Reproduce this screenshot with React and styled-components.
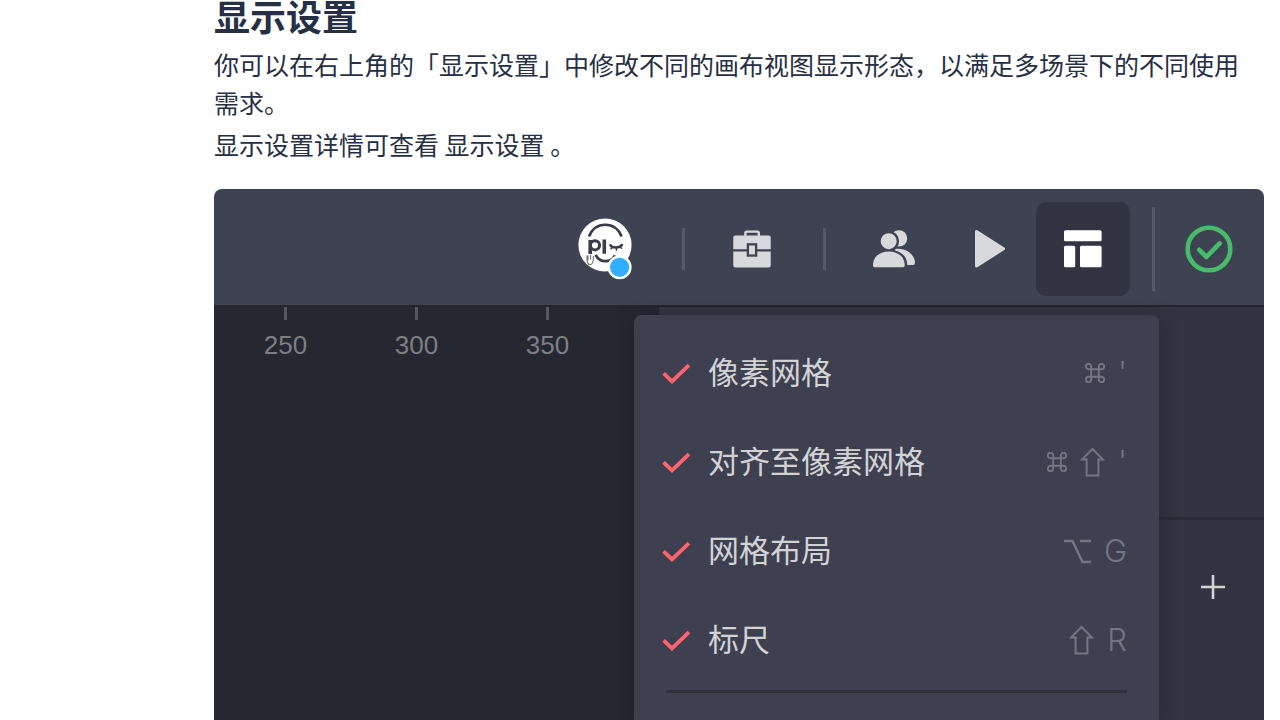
import { useState } from "react";
import styled, { createGlobalStyle } from "styled-components";

const viewOptions = [
  { id: "pixel-grid", label: "像素网格", keys: ["cmd", "'"] },
  { id: "snap-grid", label: "对齐至像素网格", keys: ["cmd", "shift", "'"] },
  { id: "layout-grid", label: "网格布局", keys: ["option", "G"] },
  { id: "ruler", label: "标尺", keys: ["shift", "R"] },
];

const rulerMarks = [250, 300, 350];

export default function App() {

  const [checked, setChecked] = useState(viewOptions.map(o => o.id));

  function toggle(id) {
    if (checked.includes(id)) {
      setChecked(checked.filter(c => c !== id));
    } else {
      setChecked([...checked, id]);
    }
  }

  return (
    <>
      <GlobalStyle />
      <Article>
        <Title>显示设置</Title>
        <Paragraph>
          你可以在右上角的「显示设置」中修改不同的画布视图显示形态，以满足多场景下的不同使用需求。
        </Paragraph>
        <Paragraph>
          显示设置详情可查看 <a href="#display">显示设置</a> 。
        </Paragraph>

        <Editor>
          <Toolbar>
            <AvatarButton aria-label="avatar"><Avatar /></AvatarButton>
            <Separator $height="42px" />
            <ToolButton aria-label="assets"><BriefcaseIcon /></ToolButton>
            <Separator $height="42px" />
            <ToolButton aria-label="members"><PeopleIcon /></ToolButton>
            <ToolButton aria-label="preview"><PlayIcon /></ToolButton>
            <ToolButton aria-label="display settings" $active><LayoutIcon /></ToolButton>
            <Separator $height="84px" />
            <StatusButton aria-label="saved"><StatusIcon /></StatusButton>
          </Toolbar>

          <Workspace>
            <Canvas>
              <Ruler>
                {rulerMarks.map(mark => <li key={mark}>{mark}</li>)}
              </Ruler>
            </Canvas>
            <SidePanel>
              <SideSection />
              <SideHeader>
                <AddButton aria-label="add">
                  <svg width="24" height="24" viewBox="0 0 24 24" stroke="currentColor" strokeWidth="2.6">
                    <path d="M0 12H24M12 0V24" />
                  </svg>
                </AddButton>
              </SideHeader>
            </SidePanel>

            <Menu>
              {viewOptions.map(({ id, label, keys }) =>
                <MenuItem key={id}>
                  <CheckBox>
                    <input type="checkbox" checked={checked.includes(id)} onChange={() => toggle(id)} />
                    <svg width="28" height="22" viewBox="0 0 28 22" fill="none" stroke="currentColor" strokeWidth="3.8">
                      <path d="M1.6 10.3L10 18.4L27 2.2" />
                    </svg>
                  </CheckBox>
                  <Label>{label}</Label>
                  <Shortcut>
                    {keys.map(k => <Key key={k} name={k} />)}
                  </Shortcut>
                </MenuItem>
              )}
              <Divider />
            </Menu>
          </Workspace>
        </Editor>
      </Article>
    </>
  )
}

function Key({ name }) {
  if (name === "cmd") {
    return (
      <svg width="20" height="20" viewBox="0 0 20 20" fill="none" stroke="currentColor" strokeWidth="1.9">
        <path d="M6.2 6.2V3.6A2.7 2.7 0 1 0 3.5 6.2H16.5A2.7 2.7 0 1 0 13.8 3.5V16.5A2.7 2.7 0 1 0 16.5 13.8H3.5A2.7 2.7 0 1 0 6.2 16.5Z" />
      </svg>
    )
  }
  if (name === "shift") {
    return (
      <svg width="25" height="30" viewBox="0 0 25 30" fill="none" stroke="currentColor" strokeWidth="2">
        <path d="M12.5 2L23 12.6H18.4V28.4H6.6V12.6H2Z" />
      </svg>
    )
  }
  if (name === "option") {
    return (
      <svg width="27" height="26" viewBox="0 0 27 26" fill="none" stroke="currentColor" strokeWidth="2.4">
        <path d="M0 3H8.5L18.5 24H27M16 3H27" />
      </svg>
    )
  }
  return <kbd>{name}</kbd>
}

function Avatar() {
  return (
    <svg width="54" height="62" viewBox="0 0 54 62" fill="none" stroke="#3a3c48" strokeWidth="2.6">
      <circle cx="27" cy="27" r="26.6" fill="#fff" stroke="none" />
      <path d="M11 18.5C14 11 20 6.8 27.3 6.8S40.5 11 43.6 18.5" />
      <circle cx="17" cy="27.3" r="4.6" strokeWidth="3" />
      <path d="M12.2 22V36M26.3 21.5V35.8" strokeWidth="3.6" />
      <path d="M32 26.4C33.5 30.6 42 30.6 44.4 26.2" strokeWidth="2.6" />
      <path d="M34.6 28.8L32.6 31.4M38.4 29.6V32.8M41.8 28.6L44 30.8" strokeWidth="1.4" />
      <path d="M17.6 36.8C20 41.4 23.6 43.2 27.4 43.2S35 41.4 37 37.4" strokeWidth="2.8" />
      <path d="M9 37.5Q8.5 46.5 12 46.7T15.5 38M10 37.3V42M12.6 36.8V41.6" stroke="#777883" strokeWidth="1.2" />
      <circle cx="41.6" cy="49.3" r="12" fill="#fff" stroke="none" />
      <circle cx="41.6" cy="49.3" r="9.6" fill="#33adff" stroke="none" />
    </svg>
  )
}

function BriefcaseIcon() {
  return (
    <svg width="48" height="48" viewBox="0 0 48 48" fill="currentColor">
      <path d="M15.4 12V8Q15.4 6.6 16.8 6.6H27.4Q28.8 6.6 28.8 8V12" fill="none" stroke="currentColor" strokeWidth="2.4" />
      <path d="M5.3 10.5H38.7Q40.7 10.5 40.7 12.5V24.3H3.3V12.5Q3.3 10.5 5.3 10.5Z" />
      <path d="M3.3 26.5H40.7V40.5Q40.7 42.5 38.7 42.5H5.3Q3.3 42.5 3.3 40.5Z" />
      <rect x="17.9" y="19.3" width="8.2" height="11.3" fill="currentColor" stroke="#3e4351" strokeWidth="2.3" />
    </svg>
  )
}

function PeopleIcon() {
  return (
    <svg width="48" height="48" viewBox="0 0 48 48" fill="currentColor">
      <circle cx="28" cy="13.4" r="8.2" />
      <path d="M24.2 24C35 22.6 44 29.5 44 37.8Q44 40 42 40H36.2C36.2 32 31.5 27.6 24.2 25.4Z" />
      <circle cx="17.7" cy="16.2" r="9.2" stroke="#3e4351" strokeWidth="2.4" />
      <path d="M2 40.4C2 31.6 8.8 26.4 17.8 26.4S33.7 31.6 33.7 40.4Q33.7 42.2 32.2 42.2H3.5Q2 42.2 2 40.4Z" />
    </svg>
  )
}

function PlayIcon() {
  return (
    <svg width="48" height="48" viewBox="0 0 48 48" fill="currentColor" stroke="currentColor" strokeWidth="3" strokeLinejoin="round">
      <path d="M11.5 6.5V41L38.5 23.8Z" />
    </svg>
  )
}

function LayoutIcon() {
  return (
    <svg width="48" height="48" viewBox="0 0 48 48" fill="currentColor">
      <rect x="5" y="5.2" width="37.6" height="11" rx="1.5" />
      <rect x="5" y="20.8" width="11.2" height="21.5" rx="1.5" />
      <rect x="21" y="20.8" width="21.6" height="21.5" rx="1.5" />
    </svg>
  )
}

function StatusIcon() {
  return (
    <svg width="48" height="48" viewBox="0 0 48 48" fill="none" stroke="currentColor" strokeWidth="4.6" strokeLinecap="round" strokeLinejoin="round">
      <circle cx="24" cy="24" r="21.3" />
      <path d="M14.2 24.8L21.4 32L34.6 18.4" />
    </svg>
  )
}

const GlobalStyle = createGlobalStyle`
  * {
    box-sizing: border-box;
  }
  body {
    margin: 0;
    background-color: #fff;
    font-family: "Noto Sans CJK SC", sans-serif;
    color: #262f43;
  }
  button {
    border: none;
    padding: 0;
    background: none;
    cursor: pointer;
  }
  svg {
    display: block;
  }
`
const Article = styled.article`
  display: flex;
  flex-direction: column;
  height: 100vh;
  overflow: hidden;
  padding: 0 16px 0 214px;
`
const Title = styled.h1`
  margin: 0 0 15px;
  font-size: 36px;
  line-height: 30px;
  font-weight: 700;
`
const Paragraph = styled.p`
  margin: 0 0 4px;
  padding-right: 16px;
  font-size: 25px;
  line-height: 38px;
  a {
    color: inherit;
    text-decoration: none;
  }
`
const Editor = styled.section`
  flex: 1;
  display: flex;
  flex-direction: column;
  margin-top: 22px;
  border-radius: 8px 8px 0 0;
  overflow: hidden;
`
const Toolbar = styled.header`
  display: flex;
  align-items: center;
  justify-content: flex-end;
  height: 118px;
  padding: 4px 23px 0 0;
  background-color: #3e4351;
  border-bottom: 2px solid #24252e;
`
const ToolButton = styled.button`
  display: flex;
  align-items: center;
  justify-content: center;
  width: 94px;
  height: 94px;
  border-radius: 10px;
  color: ${(props) => (props.$active ? "#ffffff" : "#d8d9dc")};
  background-color: ${(props) => (props.$active ? "#323541" : "transparent")};
`
const AvatarButton = styled.button`
  margin-right: 28px;
`
const StatusButton = styled.button`
  display: flex;
  justify-content: center;
  width: 64px;
  color: #48bb6c;
`
const Separator = styled.span`
  width: 3px;
  height: ${(props) => props.$height};
  margin: 0 22px;
  background-color: #565968;
`
const Workspace = styled.div`
  flex: 1;
  display: flex;
  position: relative;
`
const Canvas = styled.div`
  flex: 445;
  background-color: #252731;
`
const Ruler = styled.ul`
  display: flex;
  margin: 0;
  padding: 0 0 0 6px;
  list-style: none;
  li {
    width: 131px;
    font-family: "Liberation Sans", Arial, sans-serif;
    font-size: 26px;
    line-height: 30px;
    text-align: center;
    color: #7e7f84;
  }
  li::before {
    content: "";
    display: block;
    width: 3px;
    height: 13px;
    margin: 0 auto 10px;
    background-color: #55565f;
  }
`
const SidePanel = styled.aside`
  flex: 605;
  background-color: #323541;
`
const SideSection = styled.div`
  height: 213px;
  border-bottom: 3px solid #2a2b36;
`
const SideHeader = styled.div`
  display: flex;
  justify-content: flex-end;
  padding: 55px 39px 0 0;
`
const AddButton = styled.button`
  color: #d3d4d8;
`
const Menu = styled.div`
  position: absolute;
  top: 8px;
  right: 105px;
  bottom: 0;
  width: 50%;
  padding: 14px 32px 0 28px;
  border-radius: 8px 8px 0 0;
  background-color: #3e404f;
  box-shadow: 0 4px 20px rgba(20, 20, 28, 0.4);
`
const MenuItem = styled.label`
  display: flex;
  align-items: center;
  height: 89px;
  gap: 18px;
  font-size: 31px;
  line-height: 40px;
  color: #d2d3d7;
`
const Label = styled.span`
  padding-bottom: 6px;
`
const CheckBox = styled.span`
  display: grid;
  color: #ff6370;
  input, svg {
    grid-area: 1 / 1;
  }
  input {
    width: 28px;
    height: 22px;
    margin: 0;
    opacity: 0;
  }
  input:not(:checked) + svg {
    visibility: hidden;
  }
`
const Shortcut = styled.span`
  display: flex;
  align-items: center;
  gap: 13px;
  margin-left: auto;
  padding-bottom: 2px;
  color: #747681;
  kbd {
    font-family: Inter, "Liberation Sans", sans-serif;
    font-size: 31px;
    font-weight: 300;
  }
`
const Divider = styled.hr`
  height: 3px;
  margin: 5px 0 0 4px;
  border: none;
  background-color: #30313c;
`
